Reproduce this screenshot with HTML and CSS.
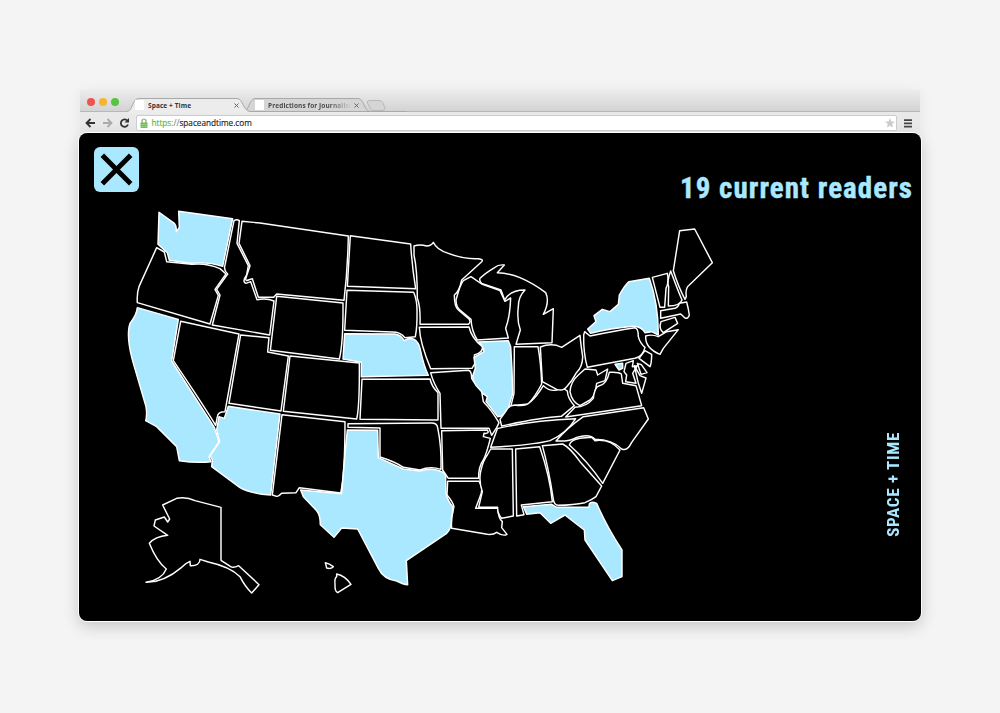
FILE: index.html
```
<!DOCTYPE html>
<html lang="en">
<head>
<meta charset="utf-8">
<title>Space + Time</title>
<link rel="stylesheet" href="styles.css">
</head>
<body>
<main class="browser">
  <header class="chrome">
    <div class="tabbar">
      <div class="lights"><i class="light red"></i><i class="light amber"></i><i class="light green"></i></div>
      <svg class="tab-shapes" viewBox="0 0 280 17">
        <path class="tab back" d="M117 14.500C122 14 122 2 128 1.500H231C237 1.500 237 14 243 14.500"/>
        <path class="tab back new" d="M242 3.500H252Q255 3.500 256 6L258 11Q258 13.500 255 13.500H247Q244 13.500 243 11L240.500 6Q240 3.500 242 3.500Z"/>
        <path class="tab front" d="M-5 14.500H0C6 14 5 1.500 12 1.500H110C116 1.500 116 14 123 14.500H285V18H-5Z"/>
      </svg>
      <div class="tab-label first"><i class="favicon"></i><span class="title">Space + Time</span><svg class="close" viewBox="0 0 5 5"><path d="M.5.5l4 4M4.500.5l-4 4"/></svg></div>
      <div class="tab-label second"><i class="favicon"></i><span class="title faded">Predictions for Journalism</span><svg class="close" viewBox="0 0 5 5"><path d="M.5.5l4 4M4.500.5l-4 4"/></svg></div>
    </div>
    <div class="toolbar">
      <svg class="nav" viewBox="0 0 48 12">
        <path class="ink" d="M10 6H2M5.500 2L1.500 6l4 4"/>
        <path class="ink dim" d="M18 6h8M22.500 2l4 4-4 4"/>
        <path class="ink" d="M42.500 3.800A3.700 3.700 0 1 0 43 7.500"/><path d="M44 1v4.500h-4.500z" fill="#333"/>
      </svg>
      <div class="address">
        <svg class="lock" viewBox="0 0 8 11"><path d="M2 5V3a2 2 0 0 1 4 0v2" fill="none" stroke="#8b9b84" stroke-width="1.200"/><rect x=".5" y="4.500" width="7" height="5.500" rx=".7" fill="#70bf57"/><path d="M1 6.500h6M1 8.300h6" stroke="#a1d68e" stroke-width=".7"/></svg>
        <span class="url"><b>https:</b><s>//</s>spaceandtime.com</span>
        <svg class="star" viewBox="0 0 10 10"><path d="M5 0l1.400 3.400 3.600.3-2.800 2.300.9 3.600L5 7.700 1.900 9.600l.9-3.600L0 3.700l3.600-.3z" fill="#ccc"/></svg>
      </div>
      <svg class="menu" viewBox="0 0 8 9"><path d="M0 1.200h8M0 4.400h8M0 7.600h8" stroke="#444" stroke-width="1.800"/></svg>
    </div>
  </header>
  <section class="panel">
    <svg class="map" viewBox="79 133 842 488" aria-label="Map of readers by state">
      <g transform="translate(120 200) scale(.33333)">
        <path class="on" d="M117 37L163 70Q170 78 169 95L178 82 176 34 338 56 308 199Q265 185 210 190L148 181 142 158 114 133Z"/>
        <path d="M110 143L133 156 140 185Q180 188 215 193Q260 188 300 206L318 222 285 268 295 286 270 372 52 308Q50 280 57 260Z"/>
        <path d="M342 62Q350 56 358 62L351 130 385 197 380 225Q365 246 378 250L392 245 411 299Q440 293 462 303L449 405 277 375 300 285 290 268 323 222Q310 210 315 195Z"/>
        <path d="M366 64L420 69 685 108Q683 210 672 301L470 282 461 292 415 292 397 236 385 240Q377 244 377 236L390 197 357 130Z"/>
      </g>
      <g transform="translate(120 320) scale(.33333)">
        <path class="on" d="M52 -37L175 -2 155 123Q230 240 283 322L297 365 267 410 273 425Q230 430 178 422L170 380Q140 350 110 320L77 302Q82 285 78 260L40 130Q17 50 30 10Q50 -15 52 -37Z"/>
        <path d="M182 4L357 42 315 275Q293 275 292 290L287 316Q250 255 160 122Z"/>
        <path d="M362 45L447 53 443 96 505 108 483 273 327 250Z"/>
        <path class="on" d="M325 259L480 282 452 525Q390 520 360 503L275 440 277 420 270 408 299 365 290 330 297 290 313 295Z"/>
      </g>
      <g transform="translate(260 210) scale(.33333)">
        <path d="M50 259L249 279Q250 400 238 447L31 421Z"/>
        <path d="M271 77L452 102Q456 170 467 236L262 229Z"/>
        <path d="M261 241L461 247Q471 270 471 300Q472 350 466 380L435 383Q420 365 395 366L254 361Z"/>
        <path class="on" d="M254 371L405 372Q422 374 433 392Q447 382 463 388Q476 397 480 415Q492 470 505 496L304 500 304 457 249 447Z"/>
      </g>
      <g transform="translate(260 340) scale(.33333)">
        <path d="M90 48L298 69Q299 200 290 237L70 214Z"/>
        <path d="M306 118L510 117Q515 140 534 158L534 240 300 238Z"/>
        <path d="M66 224L255 245Q255 400 242 459L118 443 108 458 65 460Q55 470 50 469L37 465Z"/>
        <path d="M264 251L515 249Q531 249 533 263Q545 320 543 388Q510 378 480 390L430 382Q405 365 360 351L360 264 264 262Z"/>
      </g>
      <g transform="translate(400 230) scale(.33333)">
        <path d="M42 48Q60 42 80 48Q93 48 100 37Q110 60 145 70Q190 88 235 86Q252 88 245 95L185 150Q178 185 163 195Q163 230 175 240L205 265Q215 275 205 283L60 283Q62 230 52 205Q52 120 42 75Z"/>
        <path d="M213 140L245 162 300 182 315 214 332 204Q330 260 317 295L325 324 232 330Q215 305 213 268L180 240Q168 230 168 210Q180 165 190 152Z"/>
        <path d="M240 145Q255 130 285 112Q295 103 313 105L292 128Q330 130 360 143Q400 160 437 188Q450 215 430 253L460 236 456 338 348 343 361 300Q350 270 355 230Q355 200 375 180Q330 180 314 210L303 180 245 160Q237 153 240 145Z"/>
        <path d="M58 292L207 291Q215 325 247 350Q250 368 223 375L225 400 216 415 92 416Q60 340 58 292Z"/>
        <path class="on" d="M236 336L325 332 332 350Q337 420 338 490L325 535Q310 560 293 560L258 515 262 500 240 485Q218 460 218 438L226 415 222 382 252 365Q252 350 236 336Z"/>
        <path d="M343 350H414Q423 400 425 462Q405 500 385 522L333 527 342 490Z"/>
      </g>
      <g transform="translate(400 360) scale(.33333)">
        <path d="M92 38L205 31Q215 33 215 55Q225 75 245 95L250 125Q275 150 297 188L290 203 275 226 267 205 123 205 120 100Q100 70 92 38Z"/>
        <path d="M125 212L262 210Q270 222 252 220L250 230 271 235Q260 280 250 300Q235 320 236 355L145 355 128 330Z"/>
        <path d="M143 364H237Q252 385 240 410L227 445 293 445Q295 475 307 485L305 503 321 523Q310 530 290 517Q280 525 262 523L155 505Q152 480 162 440Q158 425 141 405Z"/>
        <path d="M272 267H337L340 468 305 475Q292 460 293 442H236L247 395Q235 360 243 330Q250 300 262 285Z"/>
        <path d="M347 267L419 260Q450 350 457 425L364 435 372 464 350 468Z"/>
      </g>
      <g transform="translate(540 350) scale(.33333)">
        <path d="M-115 228L-120 208 -100 180Q-90 163 -72 166Q-40 170 -28 155Q-10 140 10 107Q30 125 50 120Q70 112 82 123Q83 145 103 167L64 199Q0 203 -115 228Z"/>
        <path d="M-128 236Q-20 210 107 206Q80 250 30 272Q-20 285 -148 292Z"/>
        <path d="M135 57L168 60 173 75 203 57 195 92 170 100Q165 140 150 150L120 167Q95 155 90 125Q92 95 115 75Z"/>
        <path d="M77 201L105 172Q140 170 160 145Q164 110 178 107Q200 103 208 67Q235 65 244 72L248 100 288 107 305 167Z"/>
        <path d="M130 200L311 173 325 207 275 277Q262 305 245 297Q218 270 165 268Q150 250 110 262Q90 275 48 273Q80 235 130 200Z"/>
        <path d="M88 285Q92 270 120 265L155 262 165 272Q210 266 240 300L188 400Q140 330 88 285Z"/>
        <path d="M7 287L68 282Q90 293 120 335L185 408 168 440Q155 450 135 458Q100 465 55 466Q42 465 40 448Q25 350 7 287Z"/>
        <path class="on" d="M-50 470L35 463 50 472 147 472Q145 450 170 460Q200 530 246 600V680L217 692 135 570 133 540Q100 515 75 495L32 520 0 488 -40 493Z"/>
      </g>
      <g transform="translate(550 220) scale(.33333)">
        <path d="M-29 381Q-5 371 20 376L35 382 90 346Q92 370 98 410Q98 440 78 460Q65 485 50 500Q40 515 20 508L-23 485Z"/>
        <path d="M104 335L120 348Q200 331 255 323Q265 325 265 350Q270 370 285 382Q278 410 255 415L112 442Q100 400 101 345Z"/>
        <path class="on" d="M113 327L138 305 132 287 157 268 180 275 205 253 208 225Q225 195 237 185L298 175Q325 250 325 345L305 335 285 338Q275 320 250 319Q180 325 122 340Z"/>
        <path d="M307 172L352 160Q358 185 348 205L344 262 330 262Z"/>
        <path d="M362 153Q385 215 396 240Q390 258 355 258L356 200Q350 185 362 153Z"/>
        <path d="M389 32L434 27 487 128 418 195Q405 205 409 230L405 238Q385 200 370 152Z"/>
        <path d="M332 272L375 265Q385 262 388 250L410 246Q415 265 418 285Q414 298 405 294L392 282 332 295Z"/>
        <path d="M333 305L375 292 383 310 340 338Q325 325 333 305Z"/>
        <path d="M287 348Q305 342 325 350L350 335 385 329 340 385 330 403Q285 385 287 348Z"/>
        <path d="M285 392L305 403Q305 430 300 440L267 415Z"/>
        <path d="M228 430L250 422 247 440 262 437 248 460 258 490 227 485 230 465 222 455Z"/>
        <path d="M262 430L274 434 291 458 273 463Z"/>
        <path d="M253 437L270 467 288 474 275 520 265 490Z"/>
        <path class="on" d="M195 433L218 430V445L207 450Z"/>
      </g>
      <g transform="translate(130 480) scale(.33333)">
        <path class="on" d="M652 -150L743 -149 745 -67 820 -33 870 -27Q905 -38 930 -27Q950 -20 947 -5L948 40Q952 60 968 80Q970 95 964 115Q967 143 950 160L829 242 833 314Q820 313 800 303Q760 297 745 265L683 147 635 144 612 172 571 134Q571 105 560 92L520 50 512 30 635 41Q643 -60 652 -150Z"/>
        <path d="M98 75L140 55Q170 50 195 62L273 82V241L302 260Q310 265 326 257L387 314 365 339Q345 320 330 290Q300 260 235 246L210 238Q210 258 181 257L180 244Q165 250 155 262Q100 308 48 307Q95 300 109 267Q80 245 58 190Q75 170 113 166L72 138 76 120 103 111 113 126 119 117Z"/>
        <path d="M586 248Q598 250 610 260Q602 268 590 264Z"/>
        <path d="M620 282Q645 287 663 313L623 338Q614 335 615 313Q613 295 620 290Z"/>
      </g>
    </svg>
    <div class="overlay">
      <button class="dismiss" aria-label="Close"><svg viewBox="0 0 46 46"><path d="M8.500 8.500l29 29M37.500 8.500l-29 29"/></svg></button>
      <div class="readers">19 current readers</div>
      <div class="brand">SPACE + TIME</div>
    </div>
  </section>
</main>
</body>
</html>
```
FILE: styles.css
```
* { box-sizing: border-box; }
body {
  margin: 0;
  height: 713px;
  padding: 90px 79px 0;
  background: #f4f4f4;
  font-family: "Open Sans", sans-serif;
  overflow: hidden;
}
.browser { width: 842px; }
.chrome {
  width: 840px;
  height: 43px;
  margin-left: .5px;
  border-radius: 3px 3px 0 0;
  background: #e9e9e9;
  box-shadow: 0 2px 14px rgba(0, 0, 0, .07);
}
.tabbar {
  display: grid;
  grid-template-columns: 47px 117px 1fr;
  height: 22px;
  border-radius: 3px 3px 0 0;
  background: linear-gradient(#ececec, #d3d3d3);
  border-bottom: 1px solid #b8b8b8;
}
.lights { display: flex; gap: 4px; padding: 8px 0 0 7px; grid-area: 1 / 1; }
.light { width: 8px; height: 8px; border-radius: 50%; }
.red { background: #ee544f; }
.amber { background: #f6b52c; }
.green { background: #58c440; }
.tab-shapes { grid-area: 1 / 2 / 2 / 4; width: 280px; height: 17px; margin: 7px 0 0 0; overflow: hidden; }
.tab { stroke: #a9a9a9; stroke-width: 1; }
.front { fill: #ececec; }
.back { fill: #d5d5d5; }
.new { stroke: #b9b9b9; }
.tab-label { display: flex; align-items: center; height: 14px; margin-top: 8px; z-index: 1; }
.first { grid-area: 1 / 2; padding-left: 8px; }
.second { grid-area: 1 / 3; padding-left: 11px; width: 120px; }
.favicon { width: 9px; height: 10px; background: #fff; margin-right: 4.500px; flex: none; }
.title { width: 86px; font-size: 6.500px; font-weight: 700; color: #333; white-space: nowrap; overflow: hidden; flex: none; letter-spacing: .1px; }
.faded { color: transparent; background: linear-gradient(90deg, #444 70%, #d5d5d5 97%); background-clip: text; -webkit-background-clip: text; }
.close { width: 5px; height: 5px; stroke: #666; stroke-width: 1; flex: none; }
.toolbar { display: flex; align-items: center; height: 20px; padding: 2px 8px 0 5px; }
.nav { width: 48px; height: 12px; flex: none; }
.ink { fill: none; stroke: #333; stroke-width: 1.800; }
.dim { stroke: #aaa; }
.address { display: flex; align-items: center; flex: 1; height: 16px; margin: 0 7px 0 3px; padding: 0 1px 0 3px; background: #fff; border: 1px solid #ccc; border-radius: 2px; }
.lock { width: 8px; height: 11px; margin-right: 4px; }
.url { flex: 1; font-size: 8.200px; line-height: 12px; color: #222; -webkit-text-stroke: .15px; }
.url b { font-weight: 400; color: #60b82f; }
.url s { text-decoration: none; color: #888; }
.star { width: 10px; height: 10px; }
.menu { width: 8px; height: 9px; }
.panel {
  display: grid;
  width: 842px;
  height: 488px;
  border-radius: 8px;
  background: #000;
  box-shadow: 0 0 0 1px #fff, 0 5px 16px rgba(0, 0, 0, .2);
}
.map { grid-area: 1 / 1; width: 842px; height: 488px; }
.map path { fill: #000; stroke: #fff; stroke-width: 1.450; stroke-linejoin: round; vector-effect: non-scaling-stroke; }
.map .on { fill: #a9e8ff; }
.overlay {
  grid-area: 1 / 1;
  display: grid;
  grid-template: 300px 1fr / 1fr 260px;
  padding: 14px 8px 0 15px;
  color: #a9e8ff;
  font-family: "Liberation Sans Narrow", "Roboto Condensed", "Open Sans Condensed", sans-serif;
  font-weight: 700;
  z-index: 1;
}
.dismiss { width: 45px; height: 45px; padding: 0; border: 0; border-radius: 6px; background: #a9e8ff; }
.dismiss svg { display: block; width: 45px; height: 45px; stroke: #000; stroke-width: 5; }
.readers { justify-self: end; padding-top: 24px; font-size: 29px; line-height: 34px; letter-spacing: 1.050px; white-space: nowrap; -webkit-text-stroke: .4px; }
.brand { grid-column: 2; justify-self: end; align-self: start; margin: -15px 11px 0 0; writing-mode: vertical-rl; transform: rotate(180deg); font-size: 17px; line-height: 18px; letter-spacing: .75px; white-space: nowrap; }
```
